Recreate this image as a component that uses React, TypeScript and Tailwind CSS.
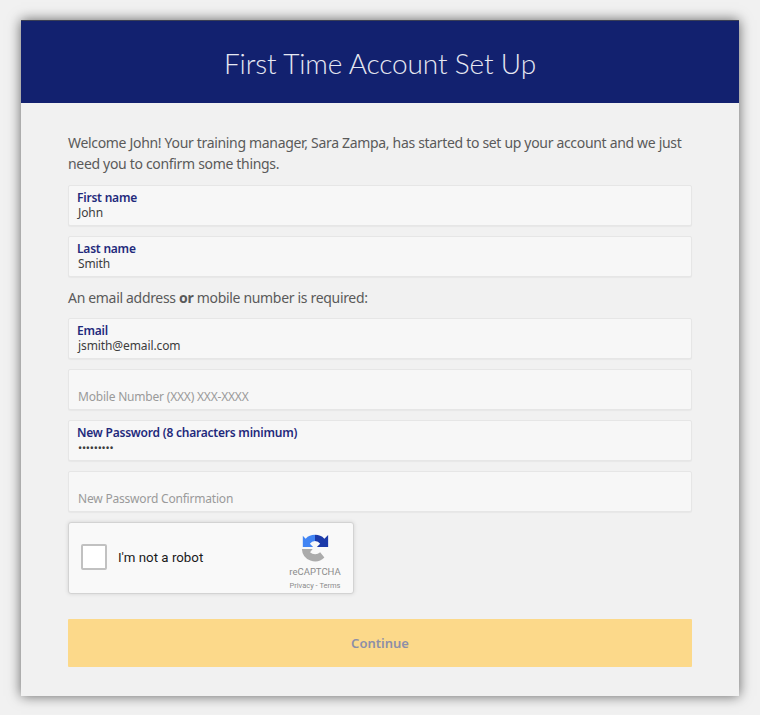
import type { ReactNode } from 'react';

const FONT = "font-['Noto_Sans','Open_Sans',sans-serif]";

type FieldProps = {
  label?: string;
  value?: string;
  placeholder?: string;
  password?: boolean;
};

function Field({ label, value, placeholder, password }: FieldProps) {
  return (
    <div className="flex h-[41px] flex-col justify-end rounded-[2px] border border-[#e6e6e6] bg-[#f7f7f7] pb-[5px] pl-[8px] shadow-[0_1px_1px_rgba(0,0,0,0.04)]">
      {label ? (
        <div className="text-[12px] leading-[15px] font-semibold tracking-[-0.22px] text-[#1f2a7c]">{label}</div>
      ) : null}
      {value ? (
        <div
          className={
            password
              ? 'pl-px text-[11px] leading-[15px] tracking-[-0.2px] text-[#3d3d3d]'
              : 'pl-px text-[12px] leading-[15px] tracking-[-0.1px] text-[#3d3d3d]'
          }
        >
          {value}
        </div>
      ) : null}
      {placeholder ? (
        <div className="pl-px text-[12px] leading-[15px] tracking-[-0.2px] text-[#9a9a9a]">{placeholder}</div>
      ) : null}
    </div>
  );
}

function Paragraph({ children }: { children: ReactNode }) {
  return <p className="text-[14px] leading-[21px] tracking-[-0.32px] text-[#5a5a5a]">{children}</p>;
}

function RecaptchaLogo() {
  return (
    <svg viewBox="0 0 32 32" className="h-[30px] w-[30px]">
      <path d="M16 2 A14 14 0 0 0 6 6 L3 3 V15 H14 L10.5 11.5 A7.5 7.5 0 0 1 16 8.5 Z" fill="#4285f4" />
      <path d="M16 2 A14 14 0 0 1 26 6 L30 2 V15 H18 L21.5 11.5 A7.5 7.5 0 0 0 16 8.5 Z" fill="#1c3aa9" />
      <path d="M2 17 H13.5 L10.7 20.5 A7.5 7.5 0 0 0 21.5 20.5 L26 26 A14 14 0 0 1 2 17 Z" fill="#ababab" />
    </svg>
  );
}

function Recaptcha() {
  return (
    <div className="flex h-[72px] w-[286px] rounded-[3px] border border-[#d3d3d3] bg-[#f9f9f9] shadow-[0_0_4px_rgba(0,0,0,0.12)] font-['Roboto',sans-serif]">
      <div className="flex flex-1 items-center pb-[3px] pl-[12px]">
        <div className="h-[26px] w-[26px] rounded-[2px] border-2 border-[#c1c1c1] bg-white" />
        <span className="ml-[11px] pt-[2px] text-[13.3px] text-[#1a1a1a]">I'm not a robot</span>
      </div>
      <div className="flex w-[78px] flex-col items-center pt-[10px] pl-[2px]">
        <RecaptchaLogo />
        <div className="mt-[3px] text-[9.5px] leading-[12px] text-[#8b8b8b]">reCAPTCHA</div>
        <div className="mt-[3px] text-[7.5px] leading-[10px] text-[#8b8b8b]">Privacy - Terms</div>
      </div>
    </div>
  );
}

export default function App() {
  return (
    <div className={`h-[715px] w-[760px] bg-[#f1f1f1] px-[21px] pt-[20px] ${FONT}`}>
      <div className="h-[676px] bg-[#f1f1f1] shadow-[0_0_12px_rgba(0,0,0,0.6)]">
        <header className="flex h-[83px] items-center justify-center border-t border-[#3a3f55] bg-[#12216f] pt-[2px]">
          <h1 className="text-[28px] font-light tracking-[-0.14px] text-[#e6e8f2] font-['Lato',sans-serif]">First Time Account Set Up</h1>
        </header>
        <div className="flex flex-col px-[47px] pt-[29px]">
          <Paragraph>
            Welcome John! Your training manager, Sara Zampa, has started to set up your account and we just need you to confirm some things.
          </Paragraph>
          <div className="mt-[11px] flex flex-col gap-[10px]">
            <Field label="First name" value="John" />
            <Field label="Last name" value="Smith" />
          </div>
          <div className="mt-[10px] mb-[10px]">
            <Paragraph>
              An email address <b className="font-bold">or</b> mobile number is required:
            </Paragraph>
          </div>
          <div className="flex flex-col gap-[10px]">
            <Field label="Email" value="jsmith@email.com" />
            <Field placeholder="Mobile Number (XXX) XXX-XXXX" />
            <Field label="New Password (8 characters minimum)" value="•••••••••" password />
            <Field placeholder="New Password Confirmation" />
          </div>
          <div className="mt-[10px]">
            <Recaptcha />
          </div>
          <button
            type="button"
            className="mt-[25px] h-[48px] rounded-[1px] bg-[#fcd98a] pt-[1px] text-[13px] font-semibold text-[#8c8fa8]"
          >
            Continue
          </button>
        </div>
      </div>
    </div>
  );
}
